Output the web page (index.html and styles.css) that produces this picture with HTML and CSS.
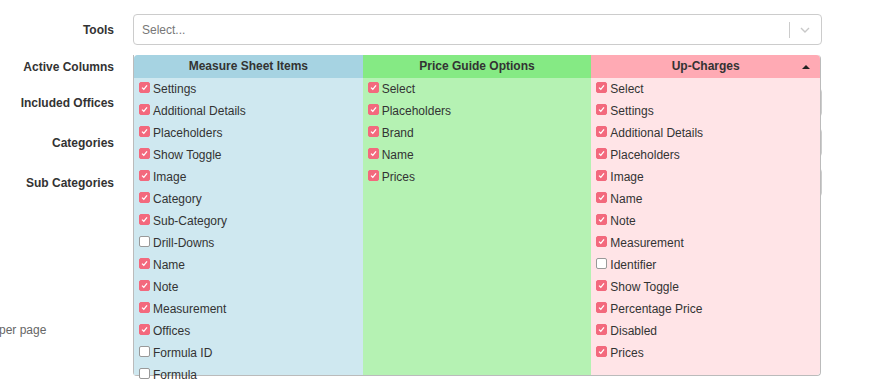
FILE: index.html
```html
<!DOCTYPE html>
<html>
  <head>
    <title>Column Settings</title>
    <link rel="stylesheet" href="styles.css">
  </head>
  <body>
    <div id="settings-form">
      <div class="form-row row-tools">
        <label class="form-label">Tools</label>
        <div class="form-control">
          <div class="select-box">
            <span class="select-placeholder">Select...</span>
            <span class="select-separator"></span>
            <svg class="select-chevron" width="10" height="6" viewBox="0 0 10 6"><path d="M1 1 L5 5 L9 1" fill="none" stroke="#c8c8c8" stroke-width="1.4"/></svg>
          </div>
        </div>
      </div>

      <div class="form-row row-columns">
        <label class="form-label">Active Columns</label>
        <div class="form-control">
          <div class="columns-trigger"></div>

          <div class="columns-panel">
            <div class="columns-col col-msi">
              <div class="col-header">Measure Sheet Items</div>
              <ul class="col-items">
                <li><span class="check on"></span>Settings</li>
                <li><span class="check on"></span>Additional Details</li>
                <li><span class="check on"></span>Placeholders</li>
                <li><span class="check on"></span>Show Toggle</li>
                <li><span class="check on"></span>Image</li>
                <li><span class="check on"></span>Category</li>
                <li><span class="check on"></span>Sub-Category</li>
                <li><span class="check"></span>Drill-Downs</li>
                <li><span class="check on"></span>Name</li>
                <li><span class="check on"></span>Note</li>
                <li><span class="check on"></span>Measurement</li>
                <li><span class="check on"></span>Offices</li>
                <li><span class="check"></span>Formula ID</li>
                <li><span class="check"></span>Formula</li>
              </ul>
            </div>
            <div class="columns-col col-pgo">
              <div class="col-header">Price Guide Options</div>
              <ul class="col-items">
                <li><span class="check on"></span>Select</li>
                <li><span class="check on"></span>Placeholders</li>
                <li><span class="check on"></span>Brand</li>
                <li><span class="check on"></span>Name</li>
                <li><span class="check on"></span>Prices</li>
              </ul>
            </div>
            <div class="columns-col col-up">
              <div class="col-header">Up-Charges<span class="col-caret"></span></div>
              <ul class="col-items">
                <li><span class="check on"></span>Select</li>
                <li><span class="check on"></span>Settings</li>
                <li><span class="check on"></span>Additional Details</li>
                <li><span class="check on"></span>Placeholders</li>
                <li><span class="check on"></span>Image</li>
                <li><span class="check on"></span>Name</li>
                <li><span class="check on"></span>Note</li>
                <li><span class="check on"></span>Measurement</li>
                <li><span class="check"></span>Identifier</li>
                <li><span class="check on"></span>Show Toggle</li>
                <li><span class="check on"></span>Percentage Price</li>
                <li><span class="check on"></span>Disabled</li>
                <li><span class="check on"></span>Prices</li>
              </ul>
            </div>
          </div>
        </div>
      </div>

      <div class="form-row row-input">
        <label class="form-label">Included Offices</label>
        <div class="form-control"><div class="text-input"></div></div>
      </div>
      <div class="form-row row-input">
        <label class="form-label">Categories</label>
        <div class="form-control"><div class="text-input"></div></div>
      </div>
      <div class="form-row row-input">
        <label class="form-label">Sub Categories</label>
        <div class="form-control"><div class="text-input"></div></div>
      </div>

      <div class="per-page">per page</div>
    </div>
  </body>
</html>
```

FILE: styles.css
```css
html, body {
  min-height: 389px;
}

body {
  margin: 0;
  font-family: 'Liberation Sans', Arial, sans-serif;
  font-size: 12px;
  color: #333;
  background: #fff;
}

#settings-form {
  padding-top: 14px;
  width: 822px;
  min-height: 375px;
}

.form-row {
  display: flex;
  align-items: center;
  gap: 19px;
}

.form-label {
  width: 114px;
  flex: none;
  text-align: right;
  font-weight: bold;
  font-size: 12px;
  color: #333;
}

.form-control {
  flex: 1;
  position: relative;
}

/* Tools select */
.row-tools {
  height: 31px;
  margin-bottom: 10px;
}

.select-box {
  height: 29px;
  border: 1px solid #ccc;
  border-radius: 4px;
  display: flex;
  align-items: center;
  padding-left: 8px;
}

.select-placeholder {
  flex: 1;
  color: #777;
}

.select-separator {
  width: 1px;
  height: 16px;
  background: #ccc;
}

.select-chevron {
  margin: 0 11px 0 10px;
}

/* Active columns */
.row-columns {
  height: 23px;
  margin-bottom: 10px;
}

.columns-trigger {
  height: 23px;
}

.columns-panel {
  position: absolute;
  top: 0;
  left: 0;
  right: 1px;
  height: 320px;
  display: flex;
  border: 1px solid #bbb;
  border-top: none;
  border-radius: 0 4px 4px 4px;
  z-index: 10;
}

.columns-col {
  flex: 1;
}

.col-header {
  height: 23px;
  line-height: 23px;
  text-align: center;
  font-weight: bold;
  position: relative;
}

.col-caret {
  position: absolute;
  right: 10px;
  top: 10px;
  border-left: 4px solid transparent;
  border-right: 4px solid transparent;
  border-bottom: 4px solid #222;
}

.col-items {
  list-style: none;
  margin: 0;
  padding: 0 0 0 5px;
}

.col-items li {
  height: 22px;
  display: flex;
  align-items: center;
  gap: 3px;
}

.check {
  width: 9px;
  height: 9px;
  margin-top: -4px;
  border: 1px solid #999;
  border-radius: 2px;
  background: #fff;
  flex: none;
}

.check.on {
  border-color: #f3697d;
  background: #f3697d url("data:image/svg+xml,%3Csvg xmlns='http://www.w3.org/2000/svg' width='9' height='9' viewBox='0 0 9 9'%3E%3Cpath d='M2 4.6 L3.8 6.3 L7 2.4' fill='none' stroke='%23fff' stroke-width='1.3'/%3E%3C/svg%3E") no-repeat center;
}

.col-msi { background: #cfe8f0; border-top-left-radius: 4px; }
.col-msi .col-header { background: #a6d3e2; border-top-left-radius: 4px; }

.col-pgo { background: #b5f2b3; }
.col-pgo .col-header { background: #85ea84; }

.col-up { background: #ffe4e7; border-radius: 0 4px 4px 0; }
.col-up .col-header { background: #ffaab4; border-top-right-radius: 4px; }

/* Inputs hidden under the panel */
.row-input {
  height: 29px;
  margin-bottom: 11px;
}

.text-input {
  height: 27px;
  border: 1px solid #ccc;
  border-radius: 4px;
}

.per-page {
  margin-top: 126px;
  margin-left: -1px;
  color: #666;
  font-size: 12px;
}
```
